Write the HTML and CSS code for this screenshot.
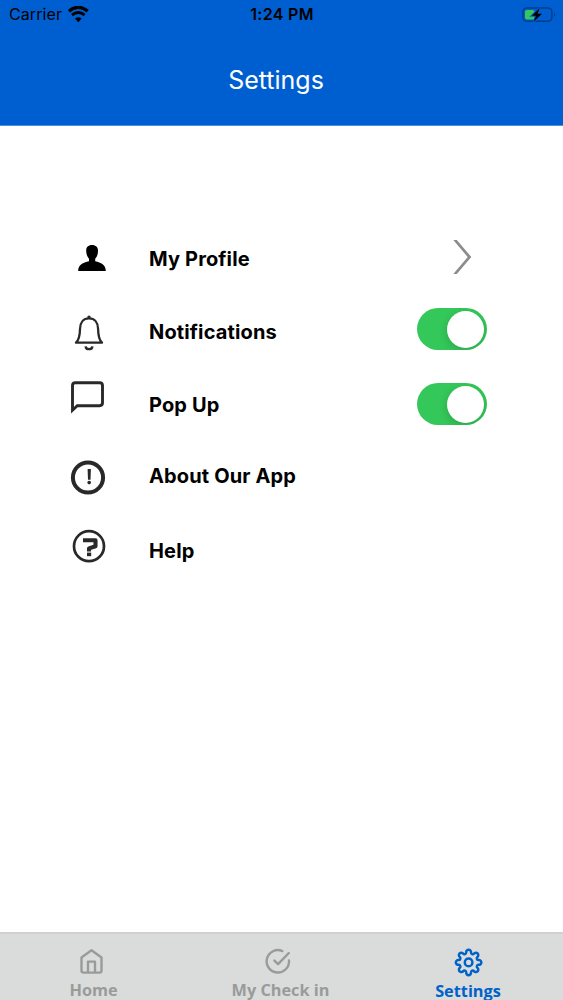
FILE: index.html
```html
<!DOCTYPE html>
<html lang="en">
<head>
<meta charset="utf-8">
<title>Settings</title>
<link rel="stylesheet" href="styles.css">
</head>
<body>
<div class="screen">
  <header class="header">
    <div class="status">
      <div class="status-left">
        <span class="carrier">Carrier</span>
        <svg class="wifi" viewBox="68 5 21 17"><path d="M68.9 10.1Q78.3 2.6 87.7 10.1" fill="none" stroke="#000" stroke-width="3.3"/><path d="M72 14Q78.3 9.2 84.6 14" fill="none" stroke="#000" stroke-width="2.9"/><path d="M74.9 17.5Q78.3 14.8 81.7 17.5L78.3 21.2Z"/></svg>
      </div>
      <span class="time">1:24 PM</span>
      <div class="status-right">
        <svg class="battery" viewBox="522 5 34 17"><rect x="522.9" y="6.9" width="29" height="13.4" rx="4" fill="none" stroke="#033c8b" stroke-width="1.5"/><path d="M554 11.3Q556.4 13.6 554 15.9Z" fill="#033c8b"/><rect x="525" y="8.9" width="9.5" height="9.6" rx="2" fill="#34c759"/><path d="M539.7 7L531.8 14.8H536L533.7 20.8L542 12.8H537.6Z" fill="#000" stroke="#005fd0" stroke-width="2" paint-order="stroke"/></svg>
      </div>
    </div>
    <h1 class="title">Settings</h1>
  </header>

  <main class="list">
    <div class="row">
      <svg class="icon icon-profile" viewBox="70 240 40 36"><path d="M92 245C88 245 86 247.5 86.2 251C86.4 255 87.7 257.2 89 258.8V261.2C83 262.5 78.2 264.5 78.2 271H105.8C105.8 264.5 101 262.5 95.2 261.2V258.8C96.8 257.2 97.8 255 98 251C98.2 247.5 96 245 92 245Z"/></svg>
      <span class="label">My Profile</span>
      <svg class="chevron" viewBox="450 238 24 38"><path d="M453.3 240H456.8L471.3 257L456.8 274H453.3L467.7 257Z" fill="#8c8c8c"/></svg>
    </div>
    <div class="row">
      <svg class="icon icon-bell" viewBox="70 314 40 38" fill="none" stroke="#292929" stroke-width="2.3" stroke-linejoin="round"><path d="M76 342.7H102C98.9 339.8 98.2 336 98.1 329C98 322.5 94.5 318.4 89 318.4S80.1 322.5 80 329C79.9 336 79.1 339.8 76 342.7Z"/><circle cx="89" cy="317.1" r="1.7" fill="#292929" stroke="none"/><path d="M85.6 346.3Q85.8 349.2 89 349.2T92.4 346.3"/></svg>
      <span class="label">Notifications</span>
      <span class="toggle toggle-notify"><span class="knob"></span></span>
    </div>
    <div class="row">
      <svg class="icon icon-chat" viewBox="70 378 40 38"><path d="M72.5 410.2V385.6Q72.5 382.7 75.5 382.7H99.6Q102.5 382.7 102.5 385.6V402.8Q102.5 405.7 99.6 405.7H77.3Z" fill="none" stroke="#292929" stroke-width="2.9"/></svg>
      <span class="label">Pop Up</span>
      <span class="toggle toggle-popup"><span class="knob"></span></span>
    </div>
    <div class="row">
      <svg class="icon icon-about" viewBox="68 458 40 40"><circle cx="88" cy="477.5" r="15.1" fill="none" stroke="#292929" stroke-width="4"/><path d="M87.6 469H90.9L90.5 479.8H88Z" fill="#292929"/><circle cx="89.2" cy="482.6" r="1.8" fill="#292929"/></svg>
      <span class="label label-about">About Our App</span>
    </div>
    <div class="row">
      <svg class="icon icon-help" viewBox="69 526 40 40"><circle cx="89" cy="546.2" r="15" fill="none" stroke="#292929" stroke-width="2.7"/><path d="M83 540.2H95.5V546.2L89 548.4V551.4" fill="none" stroke="#292929" stroke-width="4.1" stroke-linejoin="round"/><rect x="87" y="552.6" width="4.2" height="3.6" fill="#292929"/></svg>
      <span class="label">Help</span>
    </div>
  </main>

  <nav class="tabs">
    <div class="tab tab-home">
      <svg class="tab-icon" viewBox="77 945 34 34" fill="none" stroke="#999b9a" stroke-width="2.4" stroke-linejoin="round"><path d="M81.5 957.5L91.5 950.3L101.5 957.5V970.5Q101.5 972.6 99.4 972.6H83.6Q81.5 972.6 81.5 970.5Z"/><path d="M88 972.6V961.6H95V972.6"/></svg>
      <span>Home</span>
    </div>
    <div class="tab tab-check">
      <svg class="tab-icon" viewBox="264 945 34 34" fill="none" stroke="#999b9a" stroke-width="2.4" stroke-linecap="round" stroke-linejoin="round"><path d="M282.4 951.1A11.2 11.2 0 1 0 289 960.4"/><path d="M274.4 960.6L278.1 964.2L288.8 953"/></svg>
      <span>My Check in</span>
    </div>
    <div class="tab tab-settings">
      <svg class="tab-icon" viewBox="-17.6 -16.4 34 34" fill="none" stroke="#0062c9" stroke-width="2.5" stroke-linejoin="round"><path d="M10 -2.4A2.42 2.42 0 1 1 10 2.4A1.7 1.7 0 0 0 8.78 5.38A2.42 2.42 0 1 1 5.38 8.78A1.7 1.7 0 0 0 2.4 10A2.42 2.42 0 1 1 -2.4 10A1.7 1.7 0 0 0 -5.38 8.78A2.42 2.42 0 1 1 -8.78 5.38A1.7 1.7 0 0 0 -10 2.4A2.42 2.42 0 1 1 -10 -2.4A1.7 1.7 0 0 0 -8.78 -5.38A2.42 2.42 0 1 1 -5.38 -8.78A1.7 1.7 0 0 0 -2.4 -10A2.42 2.42 0 1 1 2.4 -10A1.7 1.7 0 0 0 5.38 -8.78A2.42 2.42 0 1 1 8.78 -5.38A1.7 1.7 0 0 0 10 -2.4Z"/><circle r="3.8"/></svg>
      <span>Settings</span>
    </div>
  </nav>
</div>
</body>
</html>
```
FILE: styles.css
```css
body {
  margin: 0;
  background: #fff;
  font-family: Inter, "Liberation Sans", sans-serif;
  color: #000;
}

.screen {
  display: flex;
  flex-direction: column;
  width: 563px;
  height: 1000px;
  overflow: hidden;
}

.header {
  box-sizing: border-box;
  height: 126px;
  background: #005fd0;
  border-bottom: 1px solid #4a8fdd;
}

.status {
  display: grid;
  grid-template-columns: 1fr auto 1fr;
  align-items: center;
  height: 28px;
  padding: 0 7px 0 9px;
}

.status-left {
  display: flex;
  align-items: center;
  gap: 6px;
}

.status-right {
  display: flex;
  justify-content: flex-end;
}

.carrier {
  font-size: 16px;
  line-height: 28px;
  letter-spacing: 0.1px;
}

.wifi {
  width: 21px;
  height: 17px;
}

.time {
  margin-left: -1px;
  font-size: 16px;
  font-weight: 600;
  line-height: 28px;
  letter-spacing: 0.3px;
}

.battery {
  width: 34px;
  height: 17px;
}

.title {
  margin: 32px 0 0;
  padding-right: 11px;
  font-size: 25px;
  font-weight: 400;
  line-height: 40px;
  text-align: center;
  color: #fff;
}

.list {
  flex: 1;
  padding: 96px 76px 0 68px;
}

.row {
  display: flex;
  align-items: flex-start;
  height: 73px;
}

.label {
  flex: 1;
  font-size: 20px;
  font-weight: 700;
  line-height: 75px;
  letter-spacing: 0.14px;
}

.label-about {
  line-height: 71px;
}

.icon {
  flex: none;
  width: 40px;
  height: 40px;
  margin-right: 39px;
}

.icon-profile {
  height: 36px;
  margin: 18px 39px 0 2px;
}

.icon-bell {
  height: 38px;
  margin: 19px 39px 0 2px;
}

.icon-chat {
  height: 38px;
  margin: 10px 39px 0 2px;
}

.icon-about {
  margin-top: 17px;
  margin-right: 41px;
}

.icon-help {
  margin: 12px 40px 0 1px;
}

.chevron {
  width: 24px;
  height: 38px;
  margin: 16px 13px 0 0;
}

.toggle {
  display: flex;
  justify-content: flex-end;
  box-sizing: border-box;
  width: 70px;
  height: 42px;
  padding: 2.5px 3px;
  border-radius: 21px;
  background: #34c759;
  overflow: hidden;
}

.toggle-notify {
  margin-top: 13px;
}

.toggle-popup {
  margin-top: 15px;
}

.knob {
  width: 37px;
  height: 37px;
  border-radius: 50%;
  background: #fff;
  box-shadow: 0 3px 8px rgba(0, 0, 0, 0.16);
}

.tabs {
  display: grid;
  grid-template-columns: 187px 187px 188px;
  box-sizing: border-box;
  height: 68px;
  background: #dadcdb;
  border-top: 2px solid #d0d1d0;
  font-family: "Open Sans", "Noto Sans", sans-serif;
  font-size: 16.3px;
  font-weight: 700;
  line-height: 22px;
  color: #999b9a;
}

.tab {
  display: flex;
  flex-direction: column;
  align-items: center;
  padding-top: 11px;
}

.tab-icon {
  flex: none;
  width: 34px;
  height: 34px;
}

.tab-settings {
  padding-top: 12px;
  color: #0062c9;
}
```
